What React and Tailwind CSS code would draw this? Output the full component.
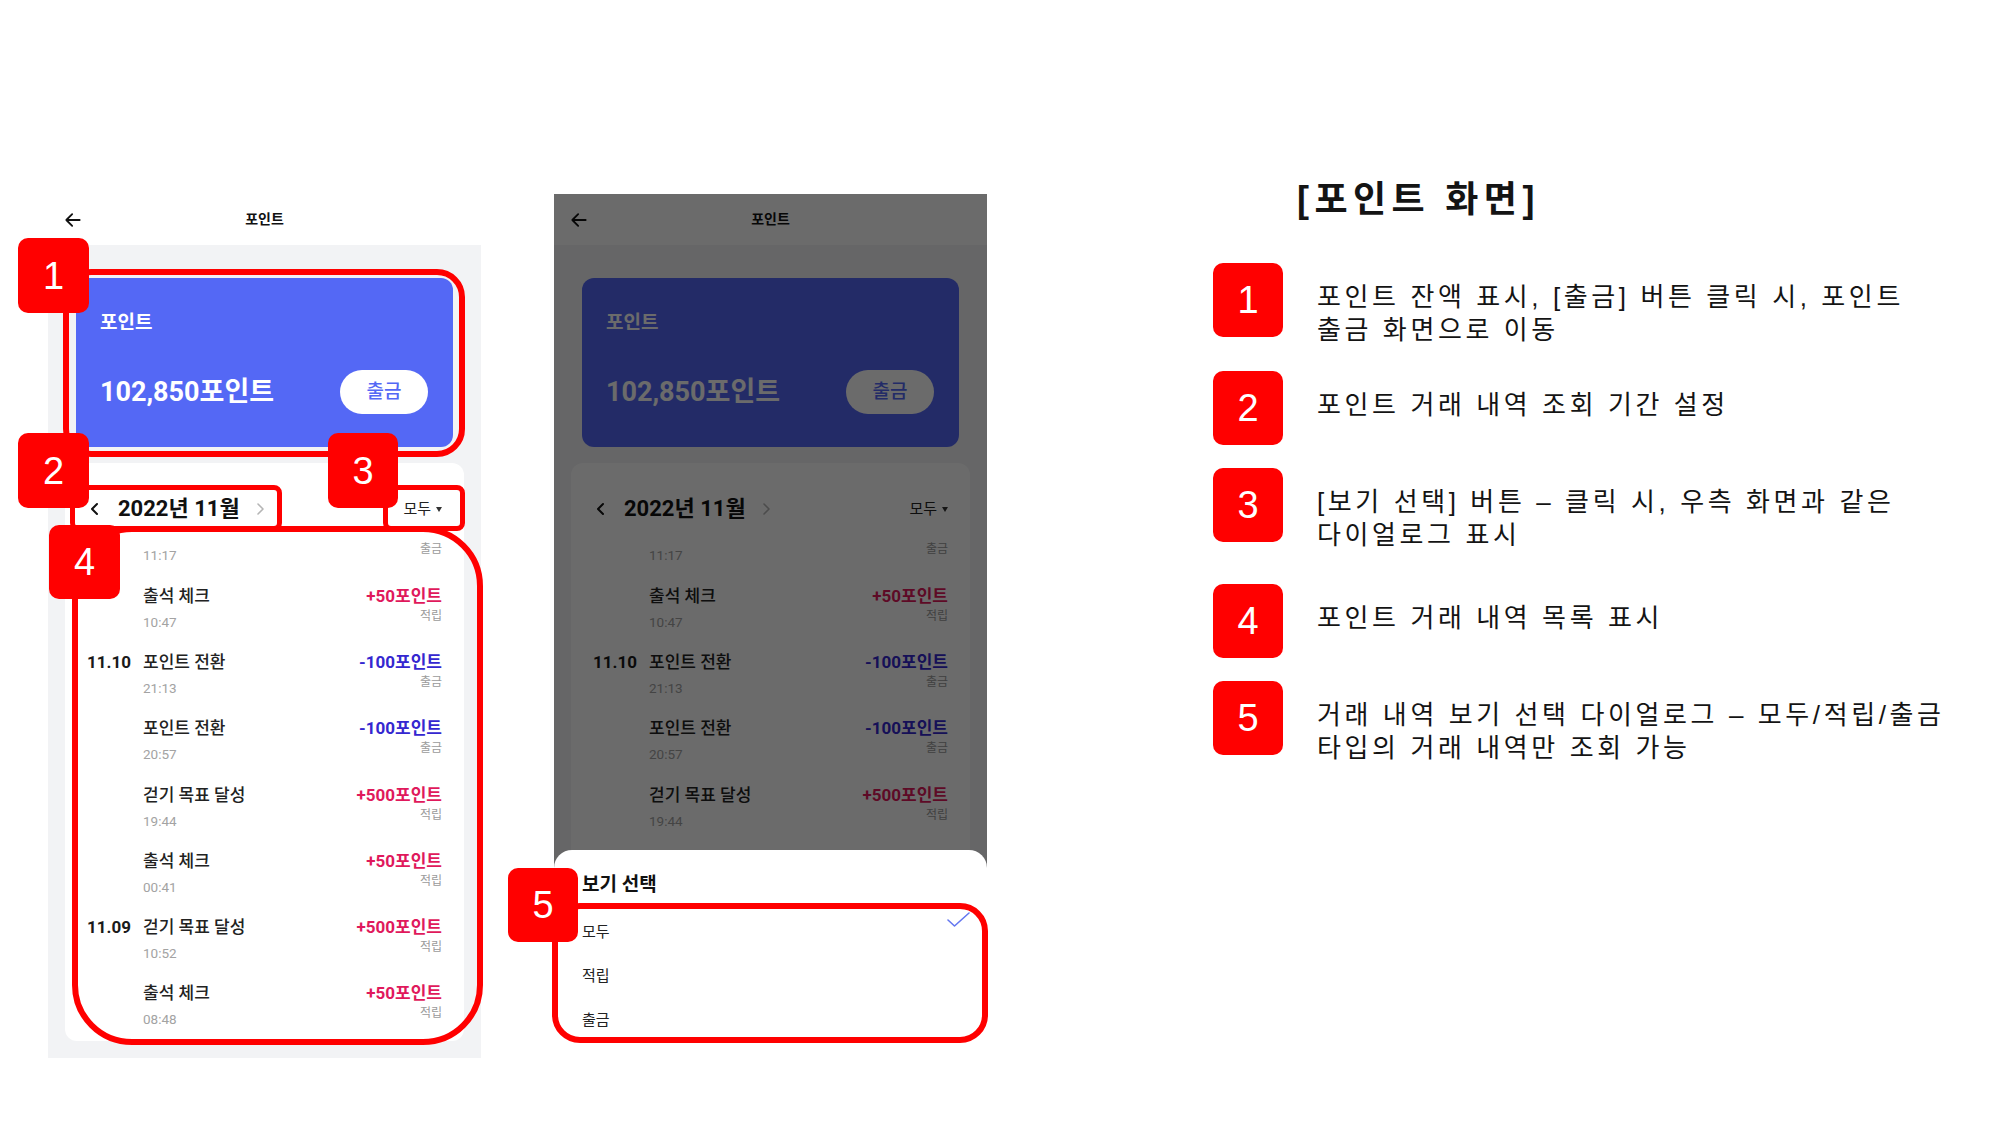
import React from 'react';

const rows = [
    { date: '', title: '포인트 전환', time: '11:17', amount: '-100포인트', type: '출금', minus: true },
    { date: '', title: '출석 체크', time: '10:47', amount: '+50포인트', type: '적립' },
    { date: '11.10', title: '포인트 전환', time: '21:13', amount: '-100포인트', type: '출금', minus: true },
    { date: '', title: '포인트 전환', time: '20:57', amount: '-100포인트', type: '출금', minus: true },
    { date: '', title: '걷기 목표 달성', time: '19:44', amount: '+500포인트', type: '적립' },
    { date: '', title: '출석 체크', time: '00:41', amount: '+50포인트', type: '적립' },
    { date: '11.09', title: '걷기 목표 달성', time: '10:52', amount: '+500포인트', type: '적립' },
    { date: '', title: '출석 체크', time: '08:48', amount: '+50포인트', type: '적립' },
];

const notes = [
    { n: '1', lines: ['포인트 잔액 표시, [출금] 버튼 클릭 시, 포인트', '출금 화면으로 이동'], mt: 'mt-[42px]' },
    { n: '2', lines: ['포인트 거래 내역 조회 기간 설정'], mt: 'mt-[24px]' },
    { n: '3', lines: ['[보기 선택] 버튼 – 클릭 시, 우측 화면과 같은', '다이얼로그 표시'], mt: 'mt-[23px]' },
    { n: '4', lines: ['포인트 거래 내역 목록 표시'], mt: 'mt-[32px]' },
    { n: '5', lines: ['거래 내역 보기 선택 다이얼로그 – 모두/적립/출금', '타입의 거래 내역만 조회 가능'], mt: 'mt-[23px]' },
];

// red number tag used for the annotations
const Badge = ({ n, className = '' }) => (
    <div className={`bg-[#ff0000] rounded-[10px] flex items-center justify-center text-white text-[38px] leading-none font-['Liberation_Sans',sans-serif] ${className}`}>
        {n}
    </div>
);

const HistoryRow = ({ row }) => (
    <div className="h-[66.3px] shrink-0 flex px-[22px] pt-[8px]">
        <div className="w-[56px] text-[17px] leading-[22px] font-bold text-[#1a1a1a]">{row.date}</div>
        <div className="flex-1">
            <div className="text-[17px] leading-[22px] font-medium text-[#222]">{row.title}</div>
            <div className="mt-[7px] text-[13.5px] leading-[16px] text-[#a3a3a3]">{row.time}</div>
        </div>
        <div className="text-right">
            <div className={`text-[17px] leading-[22px] font-bold ${row.minus ? 'text-[#3527d0]' : 'text-[#e0195c]'}`}>{row.amount}</div>
            <div className="mt-[2px] text-[12px] leading-[14px] text-[#9b9b9b]">{row.type}</div>
        </div>
    </div>
);

const PhoneScreen = () => (
    <div className="w-[433px] h-[863px] flex flex-col bg-white font-['Roboto','Noto_Sans_CJK_KR',sans-serif]">
        <div className="h-[51px] shrink-0 flex items-center">
            <svg className="ml-[15px] w-[20px] h-[20px]" viewBox="0 0 24 24" fill="none" stroke="#111" strokeWidth="2.2" strokeLinecap="round" strokeLinejoin="round">
                <path d="M20 12H4M11 5l-7 7 7 7" />
            </svg>
            <div className="flex-1 text-center text-[14px] font-bold text-[#111]">포인트</div>
            <div className="w-[35px]" />
        </div>
        <div className="flex-1 bg-[#f2f3f5] pt-[33px] pb-[17px] flex flex-col">
            <div className="mx-[28px] h-[169px] shrink-0 rounded-[12px] bg-[#5468f5] px-[24px] pt-[34px]">
                <div className="text-[19px] leading-[22px] font-bold text-white">포인트</div>
                <div className="mt-[36px] flex items-center justify-between">
                    <div className="text-[27px] leading-[30px] font-bold text-white">102,850포인트</div>
                    <div className="w-[88px] h-[44px] mr-[1px] rounded-full bg-white flex items-center justify-center text-[19px] font-medium text-[#5468f5]">출금</div>
                </div>
            </div>
            <div className="mt-[16px] mx-[17px] flex-1 bg-white rounded-[12px] flex flex-col overflow-hidden">
                <div className="h-[77px] shrink-0 pt-[34px] pl-[25px] pr-[22px]">
                    <div className="h-[24px] flex items-center">
                        <svg className="w-[10px] h-[14px]" viewBox="0 0 10 14" fill="none" stroke="#111" strokeWidth="2" strokeLinecap="round" strokeLinejoin="round">
                            <polyline points="7,2 2,7 7,12" />
                        </svg>
                        <div className="ml-[18px] text-[22px] leading-[24px] font-bold text-[#111]">2022년 11월</div>
                        <svg className="ml-[15px] w-[10px] h-[14px]" viewBox="0 0 10 14" fill="none" stroke="#b5b5b5" strokeWidth="1.6" strokeLinecap="round" strokeLinejoin="round">
                            <polyline points="3,2 8,7 3,12" />
                        </svg>
                        <div className="ml-auto flex items-center text-[15px] text-[#222]">
                            모두
                            <svg className="ml-[5px] w-[6px] h-[5px]" viewBox="0 0 6 5">
                                <polygon points="0,0 6,0 3,5" fill="#333" />
                            </svg>
                        </div>
                    </div>
                </div>
                <div className="flex-1 overflow-hidden">
                    <div className="-mt-[29.6px] flex flex-col">
                        {rows.map((row, i) => (
                            <HistoryRow key={i} row={row} />
                        ))}
                    </div>
                </div>
            </div>
        </div>
    </div>
);

const App = () => {
    return (
        <div className="w-[2000px] h-[1125px] bg-white flex overflow-hidden">
            <div className="pl-[48px] pt-[194px] flex gap-[73px] items-start">
                {/* left: screen with callouts */}
                <div className="relative">
                    <PhoneScreen />
                    <div className="absolute left-[15px] top-[75px] w-[402px] h-[188px] border-[6px] border-[#ff0000] rounded-[28px]" />
                    <div className="absolute left-[22px] top-[291px] w-[212px] h-[46px] border-[5px] border-[#ff0000] rounded-[8px]" />
                    <div className="absolute left-[335px] top-[291px] w-[82px] h-[46px] border-[5px] border-[#ff0000] rounded-[8px]" />
                    <div className="absolute left-[24px] top-[332px] w-[411px] h-[519px] border-[6px] border-[#ff0000] rounded-[60px]" />
                    <Badge n="1" className="absolute left-[-30px] top-[44px] w-[71px] h-[75px]" />
                    <Badge n="2" className="absolute left-[-30px] top-[239px] w-[71px] h-[75px]" />
                    <Badge n="3" className="absolute left-[280px] top-[239px] w-[70px] h-[75px]" />
                    <Badge n="4" className="absolute left-[1px] top-[331px] w-[71px] h-[74px]" />
                </div>

                {/* right: same screen with the view dialog open */}
                <div className="relative">
                    <PhoneScreen />
                    <div className="absolute inset-0 bg-black/[0.58]" />
                    <div className="absolute left-0 right-0 top-[656px] -bottom-[2px] bg-white rounded-t-[18px] pl-[28px] pr-[17px] font-['Roboto','Noto_Sans_CJK_KR',sans-serif]">
                        <div className="pt-[23px] text-[19px] leading-[24px] font-bold text-[#111]">보기 선택</div>
                        <div className="mt-[13px]">
                            <div className="h-[44px] flex items-center justify-between text-[15px] text-[#222]">
                                모두
                                <svg className="w-[23px] h-[16px] -translate-y-[12px]" viewBox="0 0 23 16" fill="none" stroke="#6477f0" strokeWidth="1.6" strokeLinecap="round" strokeLinejoin="round">
                                    <polyline points="1,8 7.5,14 22,1" />
                                </svg>
                            </div>
                            <div className="h-[44px] flex items-center text-[15px] text-[#222]">적립</div>
                            <div className="h-[44px] flex items-center text-[15px] text-[#222]">출금</div>
                        </div>
                    </div>
                    <div className="absolute left-[-2px] top-[709px] w-[436px] h-[140px] border-[6px] border-[#ff0000] rounded-[28px]" />
                    <Badge n="5" className="absolute left-[-46px] top-[674px] w-[70px] h-[74px]" />
                </div>
            </div>

            {/* description panel */}
            <div className="ml-[226px] pt-[179px] flex flex-col font-['Liberation_Sans','Noto_Sans_CJK_KR',sans-serif] text-[#141414]">
                <div className="ml-[84px] text-[36px] leading-[42px] font-bold tracking-[5.4px] whitespace-nowrap">[포인트 화면]</div>
                {notes.map((note) => (
                    <div key={note.n} className={`flex items-start ${note.mt}`}>
                        <Badge n={note.n} className="w-[70px] h-[74px] shrink-0" />
                        <div className="ml-[34px] mt-[18px] text-[26px] leading-[33px] tracking-[3.6px] whitespace-nowrap">
                            {note.lines.map((line, i) => (
                                <div key={i}>{line}</div>
                            ))}
                        </div>
                    </div>
                ))}
            </div>
        </div>
    );
};

export default App;
